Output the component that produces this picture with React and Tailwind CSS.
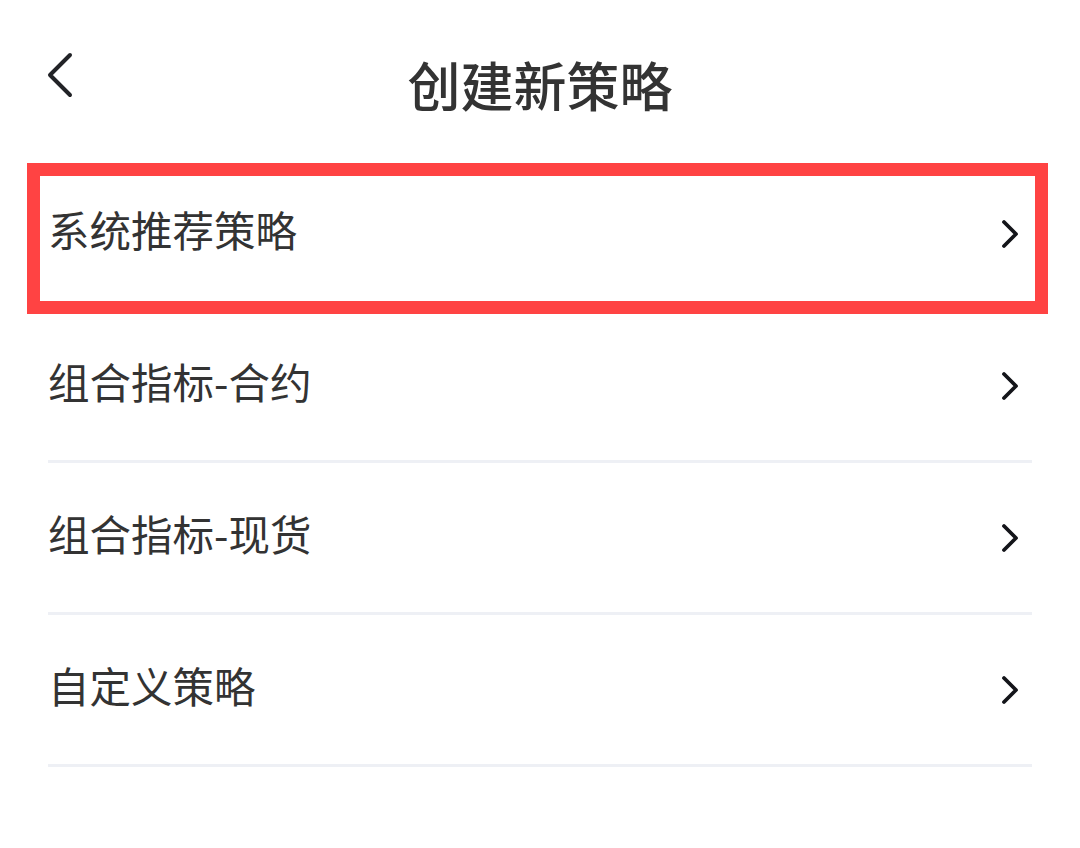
const items = ['系统推荐策略', '组合指标-合约', '组合指标-现货', '自定义策略'];

function ChevronRight() {
  return (
    <svg width="20" height="32" viewBox="0 0 20 32" fill="none" className="shrink-0">
      <path d="M4 4 L16 16 L4 28" stroke="#14151a" strokeWidth="3.8" strokeLinecap="round" strokeLinejoin="round" />
    </svg>
  );
}

function BackIcon() {
  return (
    <svg width="32" height="50" viewBox="0 0 32 50" fill="none">
      <path d="M26 5 L6 25 L26 45" stroke="#222327" strokeWidth="4" strokeLinecap="round" strokeLinejoin="round" />
    </svg>
  );
}

export default function App() {
  return (
    <div className="w-[1080px] h-[848px] bg-white overflow-hidden" style={{ fontFamily: '"Noto Sans CJK SC", "Noto Sans", sans-serif' }}>
      {/* header */}
      <div className="relative h-[159px]">
        <button className="absolute left-[44px] top-[50px]">
          <BackIcon />
        </button>
        <h1 className="pt-[58px] text-center text-[53px] leading-[53px] font-medium text-[#333333]">创建新策略</h1>
      </div>

      {/* list */}
      <div className="px-[48px]">
        {items.map((label, i) => (
          <div key={label} className="relative flex items-center justify-between h-[152px] border-b-[3px] border-[#eef0f5]">
            <span className="text-[41.5px] leading-none text-[#333333] pb-[7px]">{label}</span>
            <span className="mr-[12px]">
              <ChevronRight />
            </span>
            {i === 0 && (
              <div className="absolute left-[-21px] right-[-16px] top-[4px] bottom-[-6px] border-[13px] border-[#ff4343] pointer-events-none" />
            )}
          </div>
        ))}
      </div>
    </div>
  );
}
